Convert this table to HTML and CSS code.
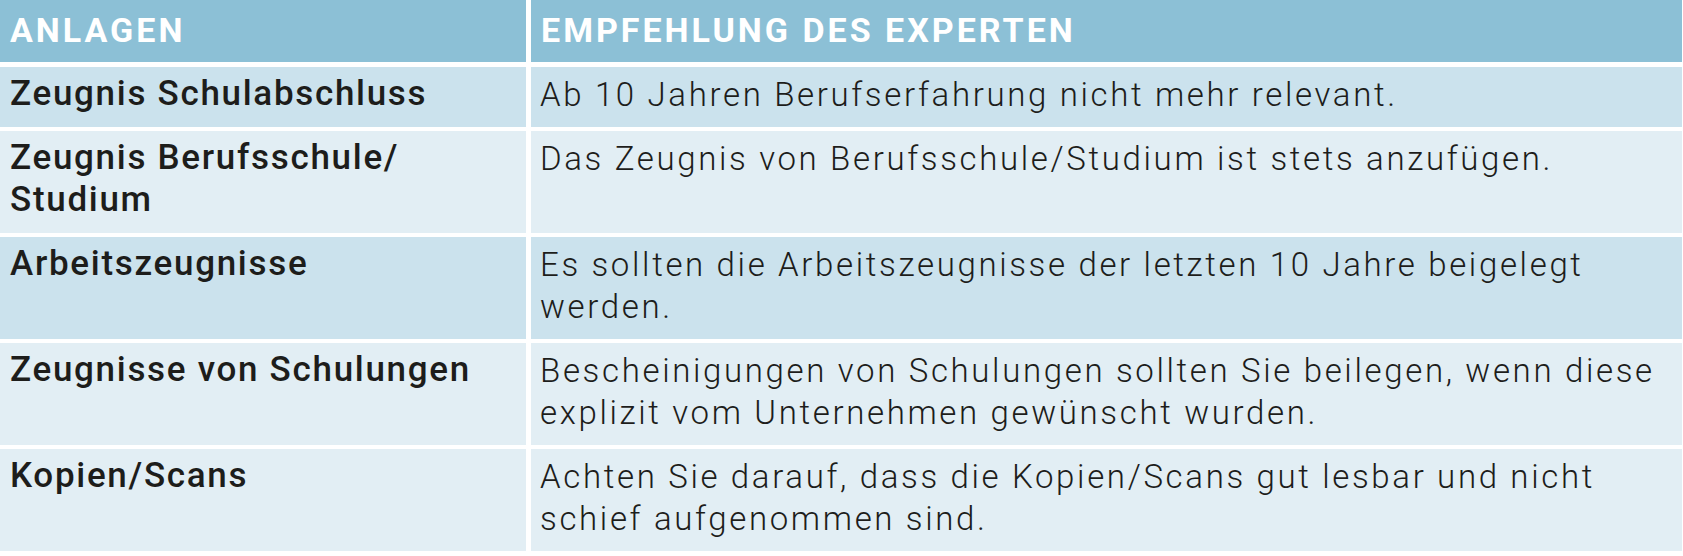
FILE: index.html
```html
<!DOCTYPE html>
<html lang="de">
<head>
<meta charset="utf-8">
<title>Anlagen</title>
<link rel="stylesheet" href="styles.css">
</head>
<body>
<div class="table">
  <div class="cell head">ANLAGEN</div>
  <div class="cell head">EMPFEHLUNG DES EXPERTEN</div>

  <div class="cell key dark">Zeugnis Schulabschluss</div>
  <div class="cell val dark">Ab 10 Jahren Berufserfahrung nicht mehr relevant.</div>

  <div class="cell key light">Zeugnis Berufsschule/<br>Studium</div>
  <div class="cell val light">Das Zeugnis von Berufsschule/Studium ist stets anzufügen.</div>

  <div class="cell key dark">Arbeitszeugnisse</div>
  <div class="cell val dark">Es sollten die Arbeitszeugnisse der letzten 10 Jahre beigelegt<br>werden.</div>

  <div class="cell key light">Zeugnisse von Schulungen</div>
  <div class="cell val light">Bescheinigungen von Schulungen sollten Sie beilegen, wenn diese<br>explizit vom Unternehmen gewünscht wurden.</div>

  <div class="cell key light">Kopien/Scans</div>
  <div class="cell val light">Achten Sie darauf, dass die Kopien/Scans gut lesbar und nicht<br>schief aufgenommen sind.</div>
</div>
</body>
</html>
```
FILE: styles.css
```css
html, body {
  margin: 0;
  padding: 0;
  background: #ffffff;
}
body {
  font-family: Roboto, "Noto Sans", sans-serif;
  color: #1d1d1b;
  overflow: hidden;
}
.table {
  display: grid;
  grid-template-columns: 526px 1151px;
  column-gap: 5px;
  row-gap: 4.6px;
  width: 1682px;
}
.cell {
  white-space: nowrap;
}
.head {
  background: #8cc0d6;
  color: #ffffff;
  font-weight: 700;
  font-size: 34px;
  letter-spacing: 3px;
  line-height: 60px;
  height: 62px;
  padding: 0 10px;
}
.key {
  font-weight: 500;
  font-size: 35px;
  letter-spacing: 1.7px;
  line-height: 41.5px;
  padding: 6px 10px 12.5px 10px;
}
.val {
  font-weight: 300;
  font-size: 33px;
  letter-spacing: 2.65px;
  line-height: 41.5px;
  padding: 7px 10px 11.5px 9px;
}
.dark {
  background: #cbe2ed;
}
.light {
  background: #e2eef4;
}
```
